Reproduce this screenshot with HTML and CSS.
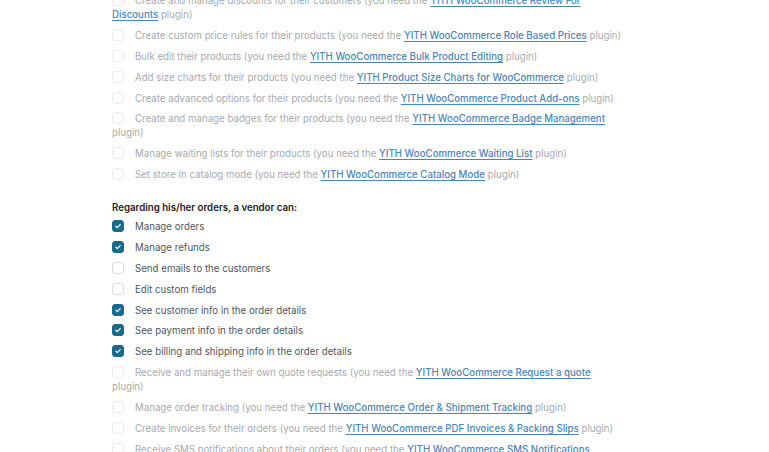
FILE: index.html
```html
<!DOCTYPE html>
<html lang="en">
<head>
<meta charset="utf-8">
<title>Vendor capabilities</title>
<link rel="stylesheet" href="styles.css">
</head>
<body>
<div class="panel">
  <div class="group">
    <div class="item disabled"><span class="cb"></span>Create and manage discounts for their customers (you need the <a href="#">YITH WooCommerce Review For Discounts</a> plugin)</div>
    <div class="item disabled"><span class="cb"></span>Create custom price rules for their products (you need the <a href="#">YITH WooCommerce Role Based Prices</a> plugin)</div>
    <div class="item disabled"><span class="cb"></span>Bulk edit their products (you need the <a href="#">YITH WooCommerce Bulk Product Editing</a> plugin)</div>
    <div class="item disabled"><span class="cb"></span>Add size charts for their products (you need the <a href="#">YITH Product Size Charts for WooCommerce</a> plugin)</div>
    <div class="item disabled"><span class="cb"></span>Create advanced options for their products (you need the <a href="#">YITH WooCommerce Product Add-ons</a> plugin)</div>
    <div class="item disabled"><span class="cb"></span>Create and manage badges for their products (you need the <a href="#">YITH WooCommerce Badge Management</a> plugin)</div>
    <div class="item disabled"><span class="cb"></span>Manage waiting lists for their products (you need the <a href="#">YITH WooCommerce Waiting List</a> plugin)</div>
    <div class="item disabled"><span class="cb"></span>Set store in catalog mode (you need the <a href="#">YITH WooCommerce Catalog Mode</a> plugin)</div>
  </div>
  <div class="group">
    <div class="heading">Regarding his/her orders, a vendor can:</div>
    <div class="item"><span class="cb checked"><svg viewBox="0 0 12 12"><path d="M3.4 6.2 5.2 7.9 8.6 4.3"/></svg></span>Manage orders</div>
    <div class="item"><span class="cb checked"><svg viewBox="0 0 12 12"><path d="M3.4 6.2 5.2 7.9 8.6 4.3"/></svg></span>Manage refunds</div>
    <div class="item"><span class="cb"></span>Send emails to the customers</div>
    <div class="item"><span class="cb"></span>Edit custom fields</div>
    <div class="item"><span class="cb checked"><svg viewBox="0 0 12 12"><path d="M3.4 6.2 5.2 7.9 8.6 4.3"/></svg></span>See customer info in the order details</div>
    <div class="item"><span class="cb checked"><svg viewBox="0 0 12 12"><path d="M3.4 6.2 5.2 7.9 8.6 4.3"/></svg></span>See payment info in the order details</div>
    <div class="item"><span class="cb checked"><svg viewBox="0 0 12 12"><path d="M3.4 6.2 5.2 7.9 8.6 4.3"/></svg></span>See billing and shipping info in the order details</div>
    <div class="item disabled"><span class="cb"></span>Receive and manage their own quote requests (you need the <a href="#">YITH WooCommerce Request a quote</a> plugin)</div>
    <div class="item disabled"><span class="cb"></span>Manage order tracking (you need the <a href="#">YITH WooCommerce Order &amp; Shipment Tracking</a> plugin)</div>
    <div class="item disabled"><span class="cb"></span>Create invoices for their orders (you need the <a href="#">YITH WooCommerce PDF Invoices &amp; Packing Slips</a> plugin)</div>
    <div class="item disabled"><span class="cb"></span>Receive SMS notifications about their orders (you need the <a href="#">YITH WooCommerce SMS Notifications</a> plugin)</div>
  </div>
</div>
</body>
</html>
```

FILE: styles.css
```css
html, body {
  margin: 0;
  padding: 0;
  background: #ffffff;
}
body {
  font-family: Inter, "Noto Sans", "Liberation Sans", sans-serif;
  font-size: 9.7px;
  line-height: 14px;
  color: #50575e;
  overflow: hidden;
  height: 452px;
}
.panel {
  width: 511px;
  margin: -6px 0 0 112px;
  display: flex;
  flex-direction: column;
  gap: 19px;
}
.group {
  display: flex;
  flex-direction: column;
  gap: 6.9px;
}
.heading {
  font-weight: 600;
  color: #1d2327;
  margin-bottom: -2.2px;
}
.item {
  color: #50575e;
}
.item.disabled {
  color: #a7aaad;
}
.item a {
  color: #2f74ad;
  font-weight: 500;
  text-decoration: underline;
  text-underline-offset: 1.5px;
}
.item.disabled a {
  color: #4b86b8;
}
.cb {
  display: inline-flex;
  align-items: center;
  justify-content: center;
  box-sizing: border-box;
  width: 12px;
  height: 12px;
  border: 1px solid #dcdcde;
  border-radius: 3px;
  background: #fff;
  vertical-align: -2px;
  margin-right: 11px;
}
.item.disabled .cb {
  border-color: #ececec;
}
.cb.checked {
  background: #1b6a8c;
  border-color: #1b6a8c;
}
.cb svg {
  width: 12px;
  height: 12px;
  fill: none;
  stroke: #fff;
  stroke-width: 1.5;
  stroke-linecap: round;
  stroke-linejoin: round;
}
```
